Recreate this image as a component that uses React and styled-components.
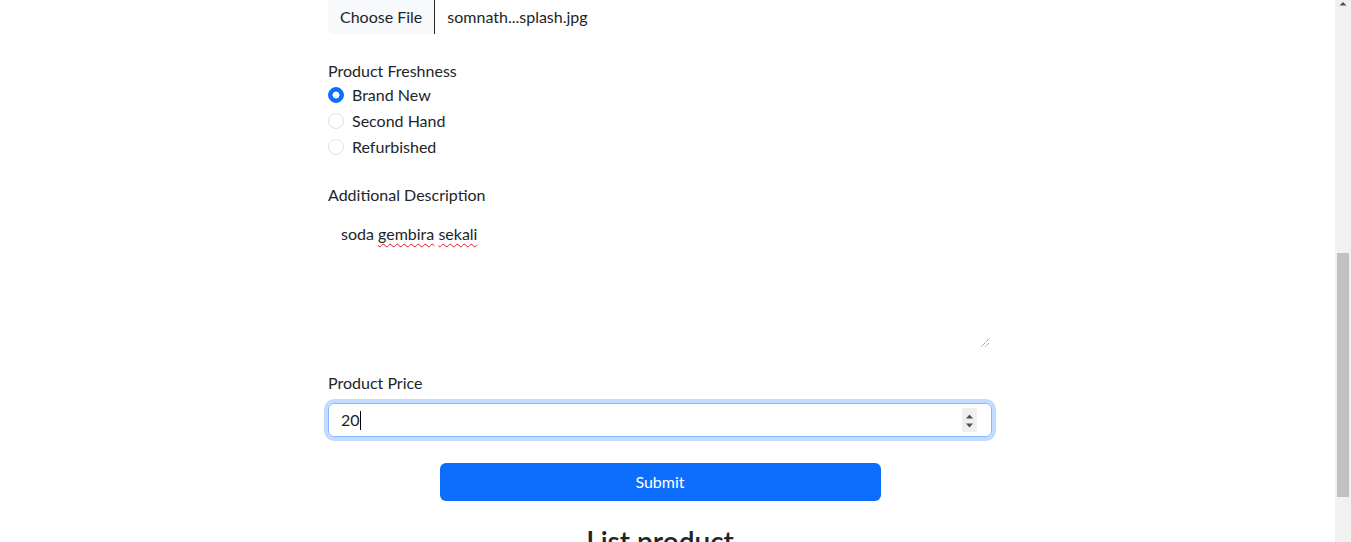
import React from 'react';
import styled, { createGlobalStyle } from 'styled-components';

const GlobalStyle = createGlobalStyle`
  *, *::before, *::after {
    box-sizing: border-box;
  }
  html,
  body {
    margin: 0;
    height: 542px;
    overflow: hidden;
    background: #fff;
  }
  body {
    color: #212529;
    font-family: Lato, 'Liberation Sans', sans-serif;
    font-size: 16px;
    line-height: 1.5;
  }
`;

const Page = styled.div`
  display: flex;
  height: 542px;
`;

const Main = styled.main`
  flex: 1;
  overflow: hidden;
`;

const FormColumn = styled.form`
  margin-left: 328px;
  width: 664px;
`;

const Group = styled.div`
  margin-bottom: ${(p) => p.$mb}px;
`;

const Label = styled.label`
  display: block;
  margin-bottom: ${(p) => p.$mb || 0}px;
`;

const FileBox = styled.div`
  align-items: center;
  background: #fff;
  border-radius: 6px;
  display: flex;
  height: 38px;
  margin-top: -4px;
  overflow: hidden;
  padding-top: 4px;
`;

const FileButton = styled.span`
  align-items: center;
  align-self: stretch;
  background: #f8f9fa;
  border-right: 1px solid #212529;
  display: flex;
  padding: 0 12px;
`;

const FileName = styled.span`
  margin-left: 12px;
`;

const CheckRow = styled.label`
  align-items: center;
  display: flex;
  gap: 8px;
  height: 24px;
  margin-bottom: 2px;
`;

const Radio = styled.input.attrs({ type: 'radio' })`
  appearance: none;
  background: #fff;
  border: 1px solid #dee2e6;
  border-radius: 50%;
  height: 16px;
  margin: 0;
  width: 16px;

  &:checked {
    background: radial-gradient(circle, #fff 0 3.2px, #0d6efd 3.8px);
    border-color: #0d6efd;
  }
`;

const TextBox = styled.div`
  border: 1px solid transparent;
  border-radius: 6px;
  display: flex;
  flex-direction: column;
  height: 133px;
  padding: 6px 12px;
`;

const Misspelled = styled.span`
  text-decoration: underline wavy #e81123;
  text-decoration-skip-ink: none;
  text-decoration-thickness: 1px;
  text-underline-offset: 3px;
`;

const Grip = styled.svg`
  align-self: flex-end;
  margin: auto -11px -6px 0;
`;

const PriceField = styled.div`
  align-items: center;
  border: 1px solid #86b7fe;
  border-radius: 6px;
  box-shadow: 0 0 0 4px rgba(13, 110, 253, 0.25);
  display: flex;
  height: 34px;
  padding: 0 12px;
`;

const Caret = styled.span`
  background: #000;
  height: 19px;
  width: 1px;
`;

const Spinner = styled.svg`
  background: #efefef;
  margin-left: auto;
  margin-right: 2px;
`;

const SubmitButton = styled.button.attrs({ type: 'button' })`
  background: #0d6efd;
  border: 0;
  border-radius: 6px;
  color: #fff;
  display: block;
  font: inherit;
  height: 38px;
  margin: 26px auto 0;
  width: 441px;
`;

const Heading = styled.h3`
  font-size: 28px;
  font-weight: 600;
  line-height: 1.2;
  margin: 24px 0 0;
  text-align: center;
`;

const ScrollTrack = styled.div`
  background: #f1f1f1;
  display: flex;
  flex-direction: column;
  width: 16px;
`;

const ScrollArrow = styled.svg`
  display: block;
`;

const ScrollThumb = styled.div`
  background: #c1c1c1;
  height: 244px;
  margin: 243px 2px 0;
`;

const freshness = ['Brand New', 'Second Hand', 'Refurbished'];

export default function App() {
  return (
    <>
      <GlobalStyle />
      <Page>
        <Main>
          <FormColumn>
            <Group $mb={25}>
              <FileBox>
                <FileButton>Choose File</FileButton>
                <FileName>somnath...splash.jpg</FileName>
              </FileBox>
            </Group>

            <Group $mb={24}>
              <Label>Product Freshness</Label>
              {freshness.map((item, i) => (
                <CheckRow key={item}>
                  <Radio name="freshness" defaultChecked={i === 0} />
                  {item}
                </CheckRow>
              ))}
            </Group>

            <Group $mb={23}>
              <Label $mb={8}>Additional Description</Label>
              <TextBox>
                <span>
                  soda <Misspelled>gembira</Misspelled>{' '}
                  <Misspelled>sekali</Misspelled>
                </span>
                <Grip width="9" height="9" viewBox="0 0 9 9">
                  <path
                    d="M0.5 8.5 L8.5 0.5 M4.5 8.5 L8.5 4.5"
                    stroke="#6b6b6b"
                    strokeWidth="1"
                    strokeDasharray="1 1"
                    fill="none"
                  />
                </Grip>
              </TextBox>
            </Group>

            <Group $mb={0}>
              <Label $mb={8}>Product Price</Label>
              <PriceField>
                <span>20</span>
                <Caret />
                <Spinner width="15" height="24" viewBox="0 0 15 24">
                  <polygon points="4,10.5 11,10.5 7.5,6.5" fill="#505050" />
                  <polygon points="4,15.5 11,15.5 7.5,19.5" fill="#505050" />
                </Spinner>
              </PriceField>
            </Group>

            <SubmitButton>Submit</SubmitButton>
            <Heading>List product</Heading>
          </FormColumn>
        </Main>

        <ScrollTrack>
          <ScrollArrow width="16" height="10" viewBox="0 0 16 10">
            <polygon points="4.5,5.5 11.5,5.5 8,2" fill="#505050" />
          </ScrollArrow>
          <ScrollThumb />
        </ScrollTrack>
      </Page>
    </>
  );
}
